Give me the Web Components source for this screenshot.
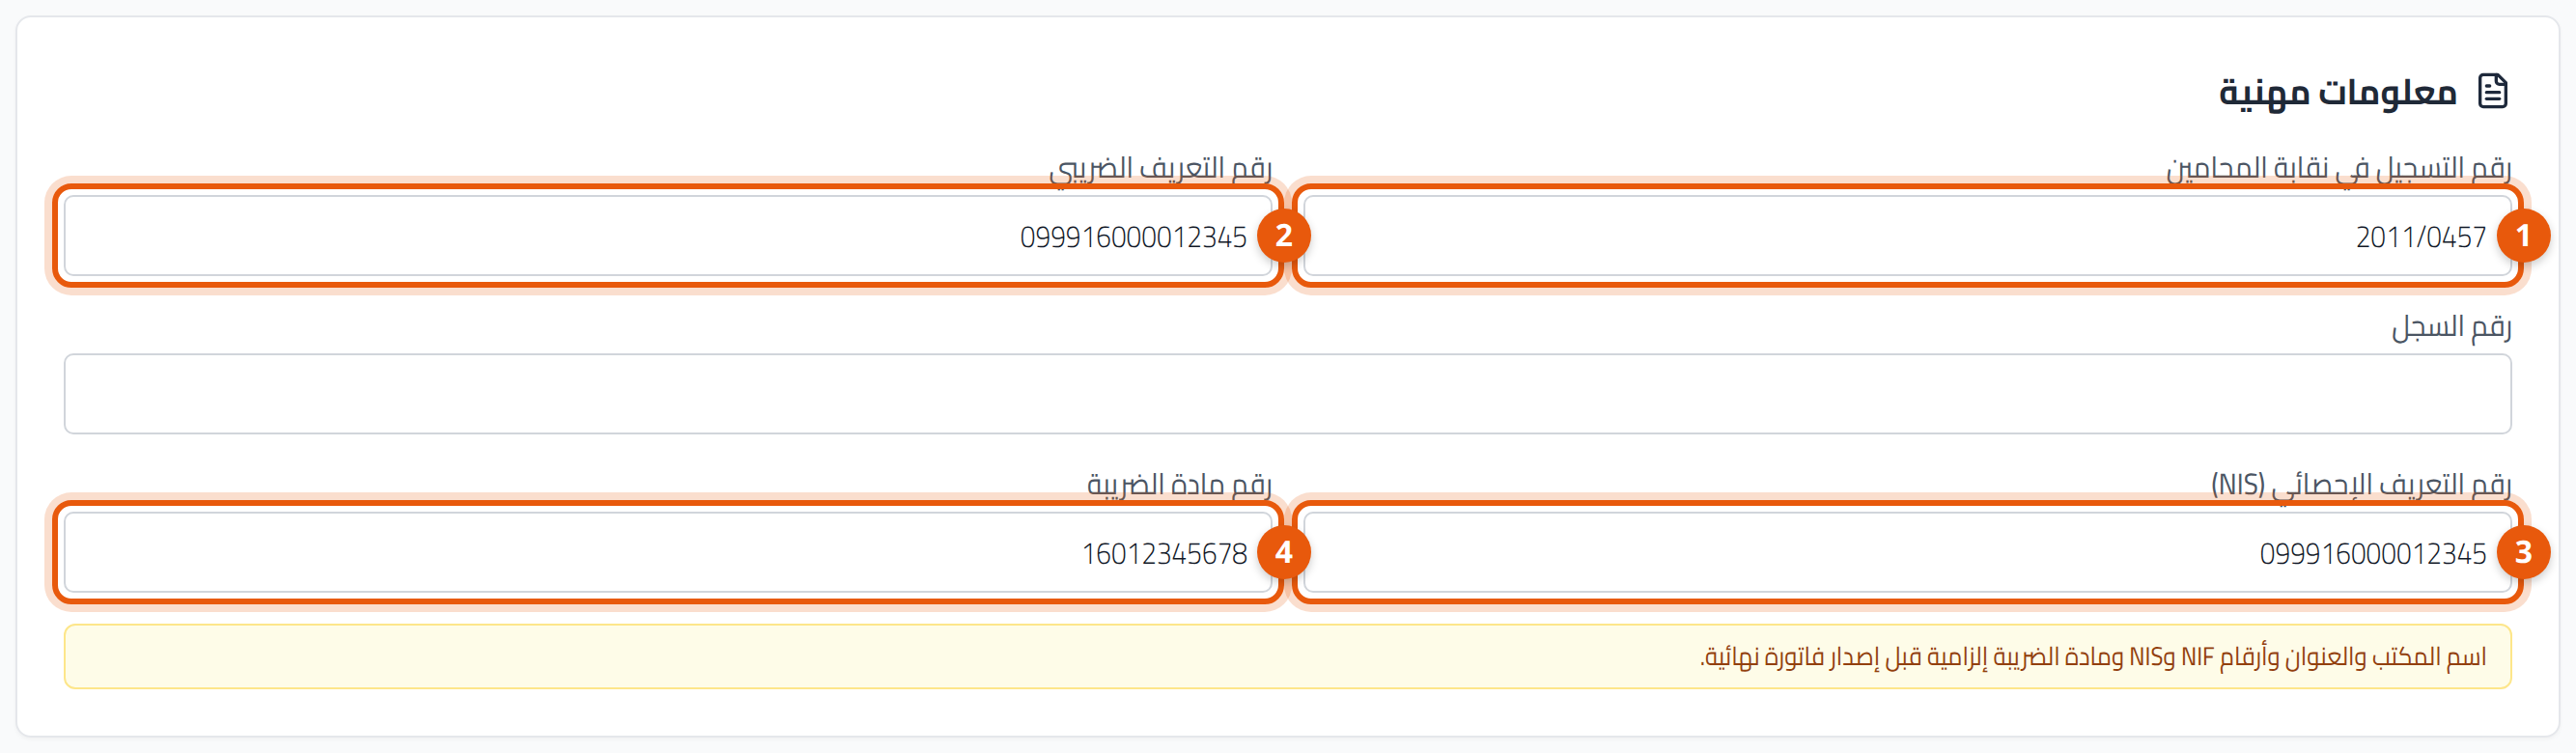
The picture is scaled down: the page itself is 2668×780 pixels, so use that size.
<!doctype html>
<html lang="ar" dir="rtl"><head><meta charset="utf-8">
<style>
html,body{margin:0;padding:0;background:#f9fafb}
body{font-family:"Cairo","Noto Sans Arabic",sans-serif;color:#111827;text-rendering:geometricPrecision}
</style></head>
<body>
<template id="t-card"><style>
:host{display:block;margin:16px;box-sizing:border-box;background:#fff;border:2px solid #e5e7eb;border-radius:16px;padding:48px;box-shadow:0 2px 4px rgba(0,0,0,.04)}
.head{display:flex;align-items:center;gap:16px;height:56px;margin-bottom:32px}
.head ::slotted(svg){flex:none}
h2{margin:0;font:700 35px/56px "Cairo",sans-serif;color:#1f2937;transform:scaleY(1.06)}
.body{display:flex;flex-direction:column;gap:32px}
</style><div class="head"><slot name="icon"></slot><h2><slot name="title"></slot></h2></div><div class="body"><slot></slot></div></template>

<template id="t-row"><style>
:host{display:grid;grid-template-columns:1fr 1fr;gap:32px}
:host([single]){grid-template-columns:1fr}
</style><slot></slot></template>

<template id="t-field"><style>
:host{display:block;min-width:0}
label{display:block;font:400 28px/40px "Cairo",sans-serif;color:#4b5563;margin-bottom:8px;transform:scaleY(1.1);transform-origin:50% 70%}
.wrap{position:relative}
.input{box-sizing:border-box;height:84px;border:2px solid #d1d5db;border-radius:10px;background:#fff;padding:0 24px;display:flex;align-items:center;font:300 28px/40px "Cairo",sans-serif;color:#111827}
bdi{display:inline-block;transform:scaleY(1.15)}
.mark{display:none;position:absolute;inset:-12px;border:6px solid #e8590c;border-radius:20px;box-shadow:0 0 0 8px rgba(232,89,12,.2);pointer-events:none}
.badge{display:none;position:absolute;top:50%;right:-40px;width:56px;height:56px;margin-top:-28px;border-radius:50%;background:#e8590c;color:#fff;font:700 32px/56px "Open Sans",sans-serif;text-align:center;box-shadow:0 4px 10px rgba(0,0,0,.2)}
:host([badge]) .mark,:host([badge]) .badge{display:block}
</style><label id="l"></label><div class="wrap"><div class="input"><bdi id="v"></bdi></div><div class="mark"></div><div class="badge" id="b"></div></div></template>

<template id="t-alert"><style>
:host{display:block;box-sizing:border-box;height:68px;background:#fefce8;border:2px solid #fde68a;border-radius:12px;padding:0 24px;font:400 24px/64px "Cairo",sans-serif;color:#92400e;white-space:nowrap}
div{transform:scaleY(1.12)}
</style><div><slot></slot></div></template>

<info-card>
  <svg slot="icon" width="40" height="40" viewBox="0 0 24 24" fill="none" stroke="#1e293b" stroke-width="2" stroke-linecap="round" stroke-linejoin="round"><path d="M15 2H6a2 2 0 0 0-2 2v16a2 2 0 0 0 2 2h12a2 2 0 0 0 2-2V7Z"/><path d="M14 2v4a2 2 0 0 0 2 2h4"/><path d="M10 9H8"/><path d="M16 13H8"/><path d="M16 17H8"/></svg>
  <span slot="title">معلومات مهنية</span>
  <form-row>
    <form-field label="رقم التسجيل في نقابة المحامين" value="2011/0457" badge="1"></form-field>
    <form-field label="رقم التعريف الضريبي" value="099916000012345" badge="2"></form-field>
  </form-row>
  <form-row single>
    <form-field label="رقم السجل" value=""></form-field>
  </form-row>
  <form-row>
    <form-field label="رقم التعريف الإحصائي (NIS)" value="099916000012345" badge="3"></form-field>
    <form-field label="رقم مادة الضريبة" value="16012345678" badge="4"></form-field>
  </form-row>
  <note-alert>اسم المكتب والعنوان وأرقام NIF وNIS ومادة الضريبة إلزامية قبل إصدار فاتورة نهائية.</note-alert>
</info-card>

<script>
function mk(name,tid,init){customElements.define(name,class extends HTMLElement{constructor(){super();const r=this.attachShadow({mode:'open'});r.appendChild(document.getElementById(tid).content.cloneNode(true));}connectedCallback(){init&&init.call(this,this.shadowRoot)}})}
mk('info-card','t-card');mk('form-row','t-row');
mk('form-field','t-field',function(r){r.getElementById('l').textContent=this.getAttribute('label');r.getElementById('v').textContent=this.getAttribute('value')||'';r.getElementById('b').textContent=this.getAttribute('badge')||''});
mk('note-alert','t-alert');
</script>
</body></html>
